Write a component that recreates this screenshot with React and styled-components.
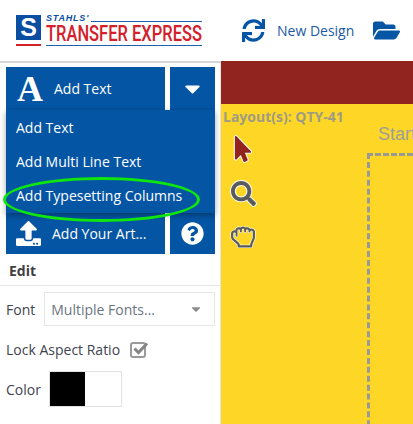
import React from 'react'
import styled, { createGlobalStyle } from 'styled-components'
import { FaSync, FaFolderOpen, FaCaretDown, FaUpload, FaQuestionCircle, FaMousePointer, FaSearch, FaRegHandRock } from 'react-icons/fa'

const GlobalStyle = createGlobalStyle`
  html, body {
    margin: 0;
    padding: 0;
    background: #fff;
    overflow: hidden;
  }
  * {
    box-sizing: border-box;
  }
`

const Page = styled.div`
  position: relative;
  width: 413px;
  height: 424px;
  overflow: hidden;
  font-family: "Open Sans", sans-serif;
  font-size: 14px;
  color: #3f4450;
`

const Header = styled.header`
  display: flex;
  align-items: center;
  height: 61px;
  padding: 0 0 0 16px;
`

const Logo = styled.div`
  display: flex;
  width: 205px;
  height: 31px;
  gap: 5px;
`

const LogoMark = styled.div`
  width: 25px;
  height: 31px;
  border-bottom: 2px solid #d3202a;
  background: linear-gradient(#0a4ea2 0 25px, #fff 25px);
  color: #fff;
  font: 900 25px/25px "Liberation Sans", sans-serif;
  text-align: center;
`

const LogoWords = styled.div`
  display: flex;
  flex-direction: column;
  width: 156px;
`

const LogoTop = styled.div`
  display: flex;
  align-items: flex-end;
  height: 7px;
  gap: 2px;
  color: #0a4ea2;
  font: italic 700 9px/7px "Liberation Sans", sans-serif;
  letter-spacing: 0.8px;

  &::after {
    content: '';
    flex: 1;
    height: 1px;
    background: #1d5fb0;
  }
`

const LogoName = styled.div`
  width: 156px;
  height: 19px;
  margin-top: 2px;
  color: #d3202a;
  font: 500 22px/19px "Roboto", sans-serif;
  white-space: nowrap;
  transform: scaleX(0.75);
  transform-origin: left center;
`

const LogoRule = styled.div`
  height: 1px;
  margin-top: 2px;
  background: #1d5fb0;
`

const HeaderAction = styled.a`
  display: flex;
  align-items: center;
  gap: 12px;
  margin-left: 21px;
  color: #1c5aa6;
  font-size: 14px;
`

const FolderButton = styled.span`
  display: flex;
  margin-left: 19px;
  color: #0455a4;
`

const Main = styled.div`
  display: flex;
  height: 363px;
`

const Sidebar = styled.aside`
  position: relative;
  flex: 0 0 221px;
  padding: 4px 5px 0 6px;
  border-top: 2px solid #d6d6d6;
  border-right: 1px solid #e4e4e4;
`

const ButtonRow = styled.div`
  display: flex;
  gap: 5px;
  height: ${p => p.$height}px;
  margin-bottom: ${p => p.$gap || 0}px;
`

const BlueButton = styled.div`
  display: flex;
  flex: ${p => (p.$narrow ? '0 0 45px' : '1')};
  align-items: center;
  justify-content: ${p => (p.$narrow ? 'center' : 'flex-start')};
  gap: ${p => p.$gap || 0}px;
  padding-left: ${p => (p.$narrow ? 0 : 10)}px;
  background: #0455a4;
  color: #fff;
  font-size: 14px;
`

const SerifA = styled.span`
  width: 28px;
  color: #fff;
  font: 700 36px/36px "Liberation Serif", serif;
  text-align: center;
`

const Menu = styled.div`
  position: absolute;
  top: 47px;
  left: 6px;
  z-index: 2;
  display: flex;
  flex-direction: column;
  width: 209px;
  height: 103px;
  background: #0455a4;
  box-shadow: 0 2px 6px rgba(0, 0, 0, 0.35);
`

const MenuItem = styled.div`
  display: flex;
  align-items: center;
  height: 34px;
  padding-left: 10px;
  color: #fff;
  font-size: 14px;
`

const Highlight = styled.div`
  position: absolute;
  top: 114px;
  left: 3px;
  z-index: 3;
  width: 197px;
  height: 45px;
  border: 3px solid #0ee60e;
  border-radius: 50%;
`

const SectionTitle = styled.div`
  height: 32px;
  margin: 0 -5px 0 -6px;
  padding: 7px 0 0 9px;
  border-bottom: 1px solid #e6e6e6;
  color: #3f3f3f;
  font-size: 14px;
  font-weight: 700;
`

const FieldRow = styled.div`
  display: flex;
  align-items: center;
  height: ${p => p.$height}px;
  gap: ${p => p.$gap}px;
  margin-top: ${p => p.$top}px;
  font-size: 14px;
`

const SelectBox = styled.div`
  display: flex;
  flex: 1;
  align-items: center;
  justify-content: space-between;
  height: 34px;
  padding: 0 11px 0 6px;
  border: 1px solid #e6e6e6;
  color: #6c7480;
`

const CheckMark = styled.svg`
  display: block;
  width: 20px;
  height: 20px;
`

const Swatch = styled.div`
  display: flex;
  width: 73px;
  height: 36px;
  border: 1px solid #e2e2e2;
`

const SwatchColor = styled.span`
  flex: 1;
  background: ${p => p.$color};
`

const Workspace = styled.main`
  display: flex;
  flex: 1;
  min-width: 0;
  flex-direction: column;
  background: #fed726;
`

const TopBand = styled.div`
  height: 43px;
  background: #922420;
`

const Canvas = styled.div`
  display: flex;
  flex: 1;
  min-height: 0;
  padding: 3px 0 0 2px;
`

const Tools = styled.div`
  flex: 0 0 144px;
`

const LayoutLabel = styled.div`
  height: 20px;
  color: #9f9b82;
  font-size: 14px;
  font-weight: 700;
  white-space: nowrap;
`

const ToolList = styled.div`
  display: flex;
  flex-direction: column;
  align-items: flex-start;
  gap: 16px;
  padding: 8px 0 0 7px;
`

const Tool = styled.span`
  display: flex;
  width: 26px;
  height: 28px;
  align-items: center;
  justify-content: center;
  color: ${p => p.$color};

  svg {
    overflow: visible;
    paint-order: stroke;
    stroke: #fff;
    stroke-width: ${p => p.$stroke || 40}px;
  }
`

const Artboard = styled.div`
  flex: 1;
  min-width: 0;
  overflow: hidden;
  padding-top: 17px;
`

const ArtTitle = styled.div`
  height: 21px;
  padding-left: 11px;
  color: #9b9f9c;
  font: 18px/21px "Liberation Sans", sans-serif;
  white-space: nowrap;
`

const DashedFrame = styled.div`
  height: 300px;
  margin-top: 8px;
  border-top: 3px dashed #9a9a94;
  border-left: 3px dashed #9a9a94;
`

const App = () => (
  <Page>
    <GlobalStyle />
    <Header>
      <Logo>
        <LogoMark>S</LogoMark>
        <LogoWords>
          <LogoTop>STAHLS'</LogoTop>
          <LogoName>TRANSFER EXPRESS</LogoName>
          <LogoRule />
        </LogoWords>
      </Logo>
      <HeaderAction>
        <FaSync size={23} color="#0455a4" />
        New Design
      </HeaderAction>
      <FolderButton><FaFolderOpen size={27} /></FolderButton>
    </Header>
    <Main>
      <Sidebar>
        <ButtonRow $height={43} $gap={103}>
          <BlueButton $gap={10}><SerifA>A</SerifA>Add Text</BlueButton>
          <BlueButton $narrow><FaCaretDown size={25} /></BlueButton>
        </ButtonRow>
        <Menu>
          <MenuItem>Add Text</MenuItem>
          <MenuItem>Add Multi Line Text</MenuItem>
          <MenuItem>Add Typesetting Columns</MenuItem>
        </Menu>
        <Highlight />
        <ButtonRow $height={41}>
          <BlueButton $gap={11}><FaUpload size={25} />Add Your Art...</BlueButton>
          <BlueButton $narrow><FaQuestionCircle size={23} /></BlueButton>
        </ButtonRow>
        <SectionTitle>Edit</SectionTitle>
        <FieldRow $height={34} $gap={9} $top={6}>
          Font
          <SelectBox>Multiple Fonts...<FaCaretDown size={14} color="#8d8d8d" /></SelectBox>
        </FieldRow>
        <FieldRow $height={20} $gap={9} $top={13}>
          Lock Aspect Ratio
          <CheckMark viewBox="0 0 20 20">
            <rect x="2" y="4" width="14" height="14" rx="2" fill="none" stroke="#9a9a9a" strokeWidth="2" />
            <path d="M5.5 9.5l4 4L18 4.5" fill="none" stroke="#858585" strokeWidth="3" />
          </CheckMark>
        </FieldRow>
        <FieldRow $height={36} $gap={8} $top={12}>
          Color
          <Swatch>
            <SwatchColor $color="#000" />
            <SwatchColor $color="#fff" />
          </Swatch>
        </FieldRow>
      </Sidebar>
      <Workspace>
        <TopBand />
        <Canvas>
          <Tools>
            <LayoutLabel>Layout(s): QTY-41</LayoutLabel>
            <ToolList>
              <Tool $color="#922420"><FaMousePointer size={26} /></Tool>
              <Tool $color="#5b5b5b"><FaSearch size={25} /></Tool>
              <Tool $color="#5b5b5b" $stroke={24}><FaRegHandRock size={24} /></Tool>
            </ToolList>
          </Tools>
          <Artboard>
            <ArtTitle>Start</ArtTitle>
            <DashedFrame />
          </Artboard>
        </Canvas>
      </Workspace>
    </Main>
  </Page>
)

export default App
